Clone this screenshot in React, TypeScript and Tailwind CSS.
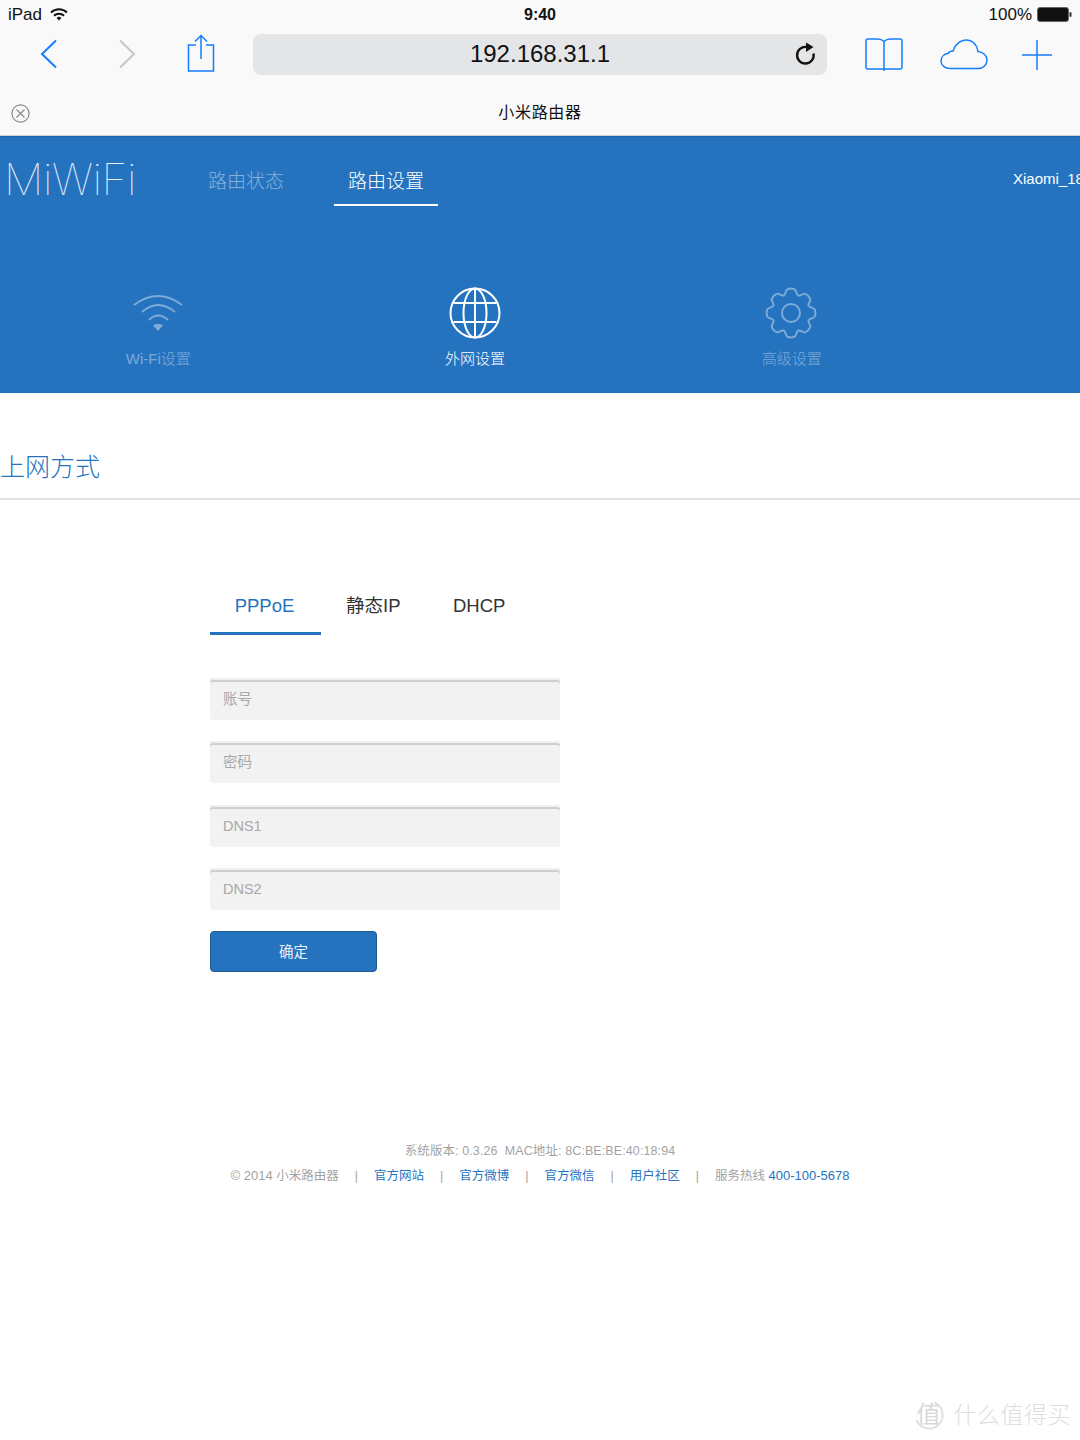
import React from "react";

const font = "font-['Liberation_Sans','Noto_Sans_CJK_SC',sans-serif]";

// rounded 8 tooth gear outline, centre 26,26
const gearPath = () => {
  const pt = (deg: number, r: number) => {
    const a = ((deg - 90) * Math.PI) / 180;
    return `${(26 + r * Math.cos(a)).toFixed(2)} ${(26 + r * Math.sin(a)).toFixed(2)}`;
  };
  let d = `M${pt(-22.5, 19)}`;
  for (let i = 0; i < 8; i++) {
    const a = i * 45;
    d += `C${pt(a - 16, 19)} ${pt(a - 13, 24)} ${pt(a - 8, 24)}`;
    d += `Q${pt(a, 25)} ${pt(a + 8, 24)}`;
    d += `C${pt(a + 13, 24)} ${pt(a + 16, 19)} ${pt(a + 22.5, 19)}`;
  }
  return d + "Z";
};

const BrowserBar = () => (
  <div className="h-[136px] bg-[#f9f9f9] flex flex-col border-b border-[#d2d2d2]">
    {/* Status bar */}
    <div className="h-[29px] flex items-center justify-between pl-[8px] pr-[8px] text-[17px] text-[#111]">
      <div className="flex items-center gap-[8px] w-[200px]">
        <span>iPad</span>
        <svg width="18" height="13" viewBox="0 0 18 13" fill="none" stroke="#111" strokeWidth="2">
          <path d="M1 4.5a11.5 11.5 0 0 1 16 0" />
          <path d="M4 7.7a7.2 7.2 0 0 1 10 0" />
          <path d="M9 12.5 6.6 10a3.4 3.4 0 0 1 4.8 0z" fill="#111" stroke="none" />
        </svg>
      </div>
      <span className="font-bold text-[16px]">9:40</span>
      <div className="flex items-center justify-end gap-[5px] w-[200px]">
        <span>100%</span>
        <svg width="35" height="15" viewBox="0 0 35 15">
          <rect x="0.5" y="0.5" width="31" height="14" rx="2.5" fill="#111" stroke="#666" />
          <rect x="32.5" y="5" width="2" height="5" rx="1" fill="#333" />
        </svg>
      </div>
    </div>
    {/* Toolbar */}
    <div className="h-[51px] flex items-center">
      <div className="w-[253px] h-full relative flex items-center">
        <svg className="ml-[40px] -mt-[1px]" width="18" height="30" viewBox="0 0 18 30" fill="none" stroke="#157efb" strokeWidth="2">
          <path d="M16 1.5 2 15l14 13.5" />
        </svg>
        <svg className="ml-[60px] -mt-[1px]" width="18" height="30" viewBox="0 0 18 30" fill="none" stroke="#c7c7c7" strokeWidth="2">
          <path d="M2 1.5 16 15 2 28.5" />
        </svg>
        <svg className="ml-[51px] -mt-[4px]" width="28" height="38" viewBox="0 0 28 38" fill="none" stroke="#157efb" strokeWidth="1.5">
          <path d="M9 11H1.5v26h25V11H19" />
          <path d="M14 25V1.5M8 7.5l6-6 6 6" />
        </svg>
      </div>
      <div className="w-[574px] h-[41px] rounded-[8px] bg-[#e4e5e7] relative flex items-center justify-center pb-[2px] text-[24px] text-[#111]">
        192.168.31.1
        <svg className="absolute right-[8px] top-[8px]" width="24" height="26" viewBox="0 0 24 26" fill="none">
          <path d="M18.5 11.5a8.3 8.3 0 1 1-7-6.5" stroke="#111" strokeWidth="2.4" />
          <path d="M11 .5 18.5 5 11 10z" fill="#111" />
        </svg>
      </div>
      <div className="flex-1 flex items-center">
        <svg className="ml-[38px]" width="38" height="34" viewBox="0 0 38 34" fill="none" stroke="#157efb" strokeWidth="1.5">
          <path d="M19 3.500C17 1.500 15 1 13 1H3a2 2 0 0 0-2 2v26a2 2 0 0 0 2 2h16m0-27.500C21 1.500 23 1 25 1h10a2 2 0 0 1 2 2v26a2 2 0 0 1-2 2H19m0-27.500V33" />
        </svg>
        <svg className="ml-[37px]" width="48" height="31" viewBox="0 0 48 31" fill="none" stroke="#157efb" strokeWidth="1.5">
          <path d="M10 29.500C5 29.500 1 26.500 1 22c0-4 3-7 7-7.500 1-1.500 2.500-2.500 5-2.500C15 5 21 1 26 1c6.500 0 11 4.500 12 11.500 5 .5 9 4 9 8.500s-3.500 8.500-9 8.500z" />
        </svg>
        <svg className="ml-[34px]" width="30" height="30" viewBox="0 0 30 30" stroke="#157efb" strokeWidth="1.5">
          <path d="M15 0v30M0 15h30" />
        </svg>
      </div>
    </div>
    {/* Tab title */}
    <div className="flex-1 flex items-center relative pt-[11px]">
      <svg className="ml-[11px]" width="19" height="19" viewBox="0 0 19 19" fill="none" stroke="#8a8a8a" strokeWidth="1.2">
        <circle cx="9.500" cy="9.500" r="8.600" />
        <path d="m5.500 5.500 8 8m0-8-8 8" />
      </svg>
      <span className="flex-1 text-center pr-[30px] text-[16px] text-[#111] tracking-[0.7px]">小米路由器</span>
    </div>
  </div>
);

const FeatureItem = ({ label, active, children }: { label: string; active?: boolean; children: React.ReactNode }) => (
  <div className={`flex flex-col items-center ${active ? "text-white" : "text-white/40"}`}>
    <div className="h-[52px] flex items-center justify-center">{children}</div>
    <span className="mt-[10px] text-[15px] leading-[20px] font-light">{label}</span>
  </div>
);

const Header = () => (
  <div className="h-[257px] bg-[#2573bf] border-t border-[#1f62a6] overflow-hidden">
    <div className="h-[69px] flex whitespace-nowrap">
      <div className="w-[208px] shrink-0 pl-[4px] pt-[12px] font-['Inter'] font-thin text-[44px] leading-[60px] tracking-[-0.4px] text-white/90">
        MiWiFi
      </div>
      <div className="w-[126px] shrink-0 pt-[33px] text-[19px] leading-[24px] font-light text-white/45">路由状态</div>
      <div className="w-[104px] shrink-0 h-[69px] pt-[33px] text-center text-[19px] leading-[24px] font-light text-white border-b-2 border-white">
        路由设置
      </div>
      <div className="ml-[575px] shrink-0 pt-[32px] text-[15px] leading-[20px] text-white">Xiaomi_1873</div>
    </div>
    <div className="grid grid-cols-3 w-[950px] mt-[81px]">
      <FeatureItem label="Wi-Fi设置">
        <svg width="52" height="40" viewBox="0 0 52 40" fill="none" stroke="currentColor" strokeWidth="2">
          <path d="M2 12Q26-6 50 12" />
          <path d="M10 19Q26 5 43 19" />
          <path d="M17 27Q26 18 36 27" />
          <path d="M26 38 21 32.500Q26 29 31 32.500z" fill="currentColor" stroke="none" />
        </svg>
      </FeatureItem>
      <FeatureItem label="外网设置" active>
        <svg width="52" height="52" viewBox="0 0 52 52" fill="none" stroke="currentColor" strokeWidth="2">
          <circle cx="26" cy="26" r="24.500" />
          <ellipse cx="26" cy="26" rx="11.500" ry="24.500" />
          <path d="M26 1.500v49M4.500 16h43M4.500 35h43" />
        </svg>
      </FeatureItem>
      <FeatureItem label="高级设置">
        <svg className="-ml-[1px]" width="52" height="52" viewBox="0 0 52 52" fill="none" stroke="currentColor" strokeWidth="2">
          <path d={gearPath()} />
          <circle cx="26" cy="26" r="9" />
        </svg>
      </FeatureItem>
    </div>
  </div>
);

const Field = ({ placeholder }: { placeholder: string }) => (
  <div className="h-[42px] rounded-[3px] bg-[#f2f2f2] shadow-[inset_0_2px_0_#f0f0f0,inset_0_4px_0_#cfcfcf] flex items-center pl-[13px] pt-[2px] text-[14.500px] text-[#a8a8a8]">
    {placeholder}
  </div>
);

const ConnectionForm = () => (
  <div className="pl-[210px] w-[560px] box-content">
    <div className="flex items-stretch h-[71px] text-[18.500px] text-[#333] mt-[64px]">
      <div className="w-[111px] text-center pt-[28px] pr-[2px] text-[#2573bf] border-b-[3px] border-[#2573bf]">PPPoE</div>
      <div className="ml-[25px] w-[55px] pt-[28px] whitespace-nowrap">静态IP</div>
      <div className="ml-[52px] pt-[28px]">DHCP</div>
    </div>
    <div className="mt-[43px] w-[350px] flex flex-col gap-[21.330px]">
      <Field placeholder="账号" />
      <Field placeholder="密码" />
      <Field placeholder="DNS1" />
      <Field placeholder="DNS2" />
    </div>
    <div className="mt-[21px] w-[167px] h-[41px] rounded-[4px] bg-[#2573bf] border border-[#1c5a98] text-white/90 text-[14.500px] flex items-center justify-center pt-[2px]">
      确定
    </div>
  </div>
);

const FooterLink = ({ children }: { children: React.ReactNode }) => <span className="text-[#2573bf]">{children}</span>;
const Sep = () => <span className="mx-[16px]">|</span>;

const Footer = () => (
  <div className="mt-[167px] text-center text-[12.500px] leading-[25px] text-[#a3a3a3]">
    <div className="tracking-[0.1px]">系统版本: 0.3.26&nbsp;&nbsp;MAC地址: 8C:BE:BE:40:18:94</div>
    <div className="-mt-[1px]">
      <span className="text-[13px]">© 2014</span> 小米路由器
      <Sep />
      <FooterLink>官方网站</FooterLink>
      <Sep />
      <FooterLink>官方微博</FooterLink>
      <Sep />
      <FooterLink>官方微信</FooterLink>
      <Sep />
      <FooterLink>用户社区</FooterLink>
      <Sep />
      服务热线 <span className="text-[13px] text-[#2573bf]">400-100-5678</span>
    </div>
  </div>
);

export default function App() {
  return (
    <div className={`${font} relative w-[1080px] h-[1440px] bg-white overflow-hidden`}>
      <BrowserBar />
      <Header />
      <div className="h-[107px] border-b-2 border-[#e2e2e2] pt-[57px] text-[25px] leading-[34px] font-light text-[#2573bf]">
        上网方式
      </div>
      <ConnectionForm />
      <Footer />
      {/* Watermark */}
      <div className="absolute right-[9px] bottom-[8px] flex items-center gap-[10px] text-[#dedede]">
        <span className="relative w-[30px] h-[30px] flex items-center justify-center text-[24px] text-[#d8d8d8]">
          值
          <svg className="absolute left-0 top-0" width="30" height="30" viewBox="0 0 30 30" fill="none" stroke="#e0e0e0" strokeWidth="2">
            <path d="M20 2.500A13.500 13.500 0 1 1 2.500 20" />
          </svg>
        </span>
        <span className="text-[23px] tracking-[0.5px] font-light">什么值得买</span>
      </div>
    </div>
  );
}
